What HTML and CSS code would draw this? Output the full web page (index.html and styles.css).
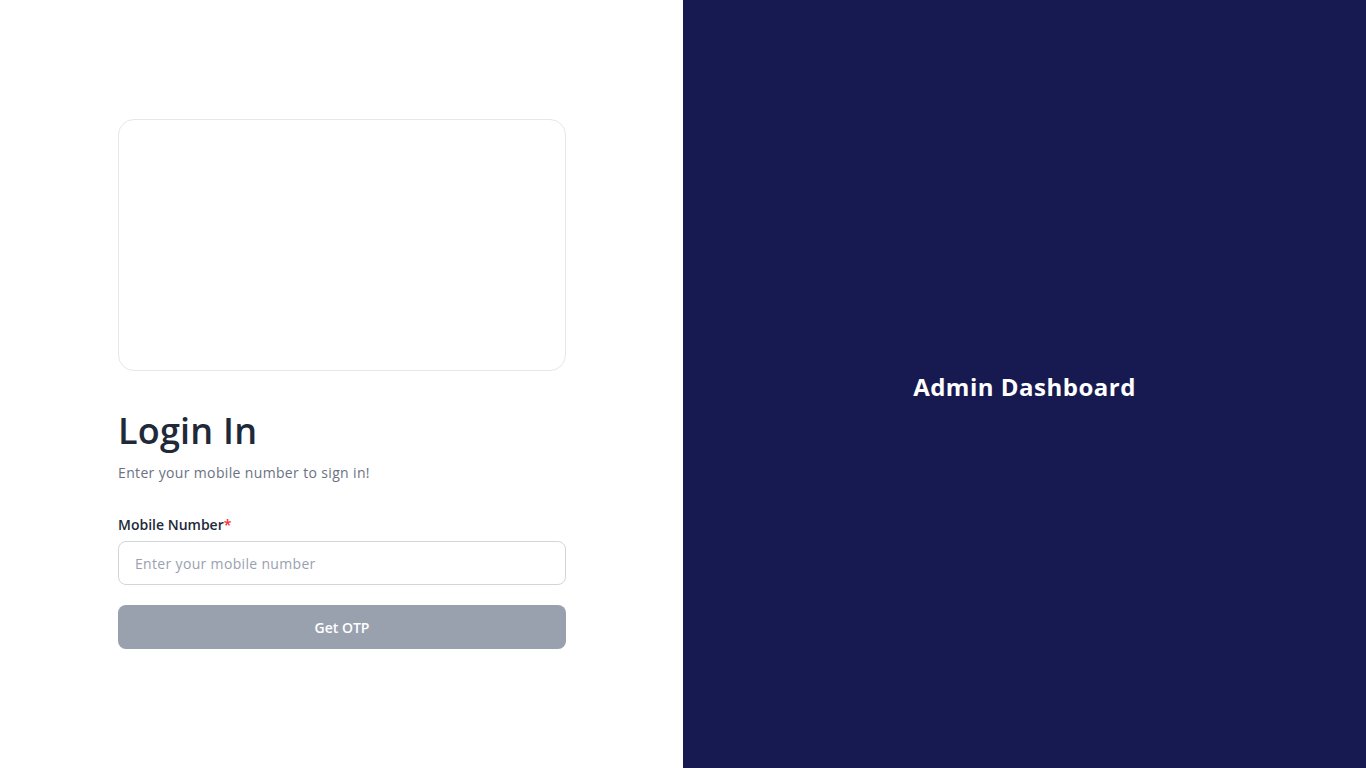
FILE: index.html
```html
<!DOCTYPE html>
<html lang="en">
<head>
<meta charset="utf-8">
<title>Login</title>
<link rel="stylesheet" href="styles.css">
</head>
<body>
<div class="page">
  <section class="left">
    <form class="form">
      <div class="banner"></div>
      <h1 class="title">Login In</h1>
      <p class="subtitle">Enter your mobile number to sign in!</p>
      <label class="label" for="mobile">Mobile Number<span class="req">*</span></label>
      <input class="input" id="mobile" type="text" placeholder="Enter your mobile number">
      <button class="btn" type="button">Get OTP</button>
    </form>
  </section>
  <section class="right">
    <h2 class="brand">Admin Dashboard</h2>
  </section>
</div>
</body>
</html>
```

FILE: styles.css
```css
* { box-sizing: border-box; }
html, body { margin: 0; padding: 0; height: 100%; }
body {
  font-family: "Open Sans", "DejaVu Sans", sans-serif;
  background: #fff;
}
.page {
  display: grid;
  grid-template-columns: repeat(2, minmax(0, 1fr));
  height: 768px;
}
.left {
  display: flex;
  align-items: center;
  padding-left: 118px;
  background: #fff;
}
.right {
  background: #171a51;
  display: flex;
  align-items: center;
  justify-content: center;
}
.form {
  width: 448px;
  display: flex;
  flex-direction: column;
}
.banner {
  height: 252px;
  border: 1px solid #e5e7eb;
  border-radius: 16px;
  background: #fff;
}
.title {
  margin: 40px 0 0;
  font-size: 36px;
  line-height: 40px;
  font-weight: 600;
  color: #1e2939;
  letter-spacing: 0.2px;
}
.subtitle {
  margin: 12px 0 0;
  font-size: 14px;
  line-height: 20px;
  color: #6a7282;
  letter-spacing: 0.35px;
}
.label {
  margin-top: 32px;
  font-size: 14px;
  line-height: 20px;
  font-weight: 600;
  color: #1e2939;
}
.req { color: #fb2c36; }
.input {
  margin-top: 6px;
  height: 44px;
  border: 1px solid #d1d5dc;
  border-radius: 8px;
  padding: 0 16px;
  font: inherit;
  font-size: 14px;
  letter-spacing: 0.33px;
  color: #1e2939;
  background: #fff;
  outline: none;
}
.input::placeholder { color: #99a1af; }
.btn {
  margin-top: 20px;
  height: 44px;
  border: 0;
  border-radius: 8px;
  background: #99a1af;
  color: #fff;
  font: inherit;
  font-size: 14px;
  font-weight: 600;
}
.brand {
  margin: 6px 0 0;
  color: #fff;
  font-size: 24px;
  line-height: 32px;
  font-weight: 700;
  letter-spacing: 0.5px;
}
```
